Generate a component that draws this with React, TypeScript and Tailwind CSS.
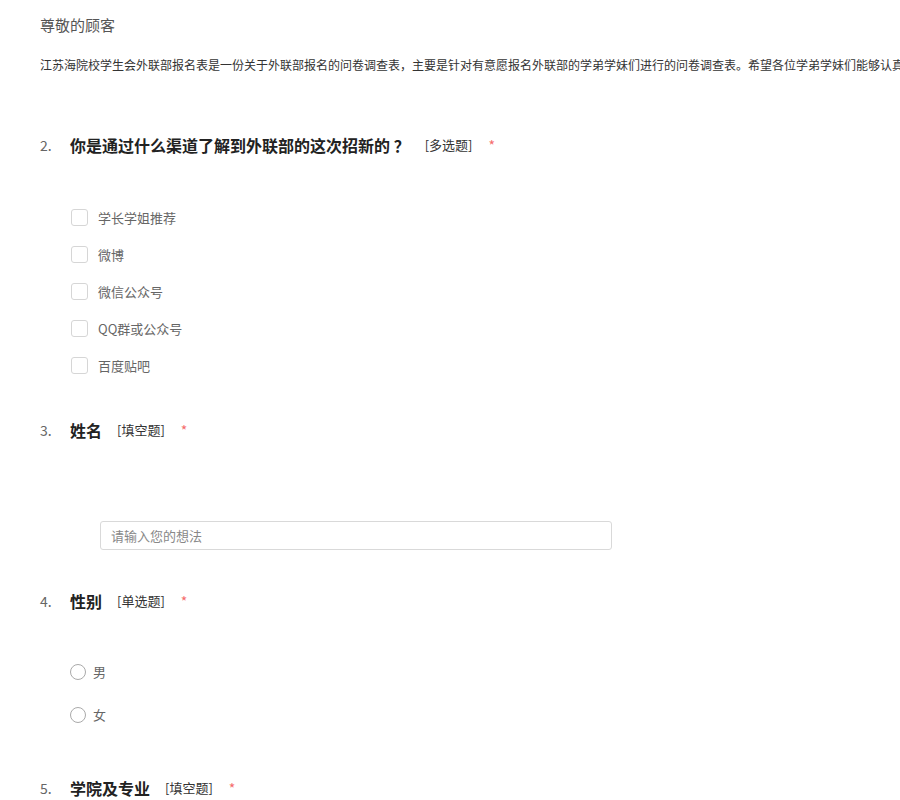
import React from "react";

const font = { fontFamily: '"Noto Sans CJK SC", "Liberation Sans", sans-serif' };

function QTitle({ n, title, type }: { n: string; title: string; type: string }) {
  return (
    <div className="flex items-center h-[24px]">
      <span className="w-[30px] text-[14px] text-[#666]">{n}</span>
      <span className="text-[16px] font-bold text-[#222]">{title}</span>
      <span className="ml-[15px] text-[13px] text-[#333]">{type}</span>
      <span className="ml-[16px] text-[14px] text-[#f56c6c]">*</span>
    </div>
  );
}

function Check({ label }: { label: string }) {
  return (
    <div className="flex items-center h-[37px] pl-[71px]">
      <span className="w-[17px] h-[17px] rounded-[3px] border border-[#d6d6d6] bg-white" />
      <span className="ml-[10px] text-[13px] text-[#666]">{label}</span>
    </div>
  );
}

function Radio({ label }: { label: string }) {
  return (
    <div className="flex items-center h-[43px] pl-[70px]">
      <span className="w-[16px] h-[16px] rounded-full border border-[#aaa] bg-white" />
      <span className="ml-[7px] text-[13px] text-[#666]">{label}</span>
    </div>
  );
}

export default function App() {
  return (
    <div className="w-[900px] h-[800px] overflow-hidden bg-white" style={font}>
      <div className="pl-[40px] pt-[15px]">
        <div className="text-[15px] leading-[20px] text-[#555]">尊敬的顾客</div>
        <div className="mt-[20px] text-[12px] leading-[20px] text-[#333] whitespace-nowrap">
          江苏海院校学生会外联部报名表是一份关于外联部报名的问卷调查表，主要是针对有意愿报名外联部的学弟学妹们进行的问卷调查表。希望各位学弟学妹们能够认真填写，谢谢！
        </div>
        <div className="mt-[58px]">
          <QTitle n="2." title="你是通过什么渠道了解到外联部的这次招新的 ？" type="[多选题]" />
        </div>
      </div>
      <div className="mt-[42px]">
        <Check label="学长学姐推荐" />
        <Check label="微博" />
        <Check label="微信公众号" />
        <Check label="QQ群或公众号" />
        <Check label="百度贴吧" />
      </div>
      <div className="pl-[40px] mt-[34px]">
        <QTitle n="3." title="姓名" type="[填空题]" />
      </div>
      <div className="pl-[100px] mt-[79px]">
        <div className="w-[512px] h-[29px] border border-[#d9d9d9] rounded-[3px] flex items-center pl-[10px] text-[13px] text-[#888]">
          请输入您的想法
        </div>
      </div>
      <div className="pl-[40px] mt-[39px]">
        <QTitle n="4." title="性别" type="[单选题]" />
      </div>
      <div className="mt-[37px]">
        <Radio label="男" />
        <Radio label="女" />
      </div>
      <div className="pl-[40px] mt-[40px]">
        <QTitle n="5." title="学院及专业" type="[填空题]" />
      </div>
    </div>
  );
}
